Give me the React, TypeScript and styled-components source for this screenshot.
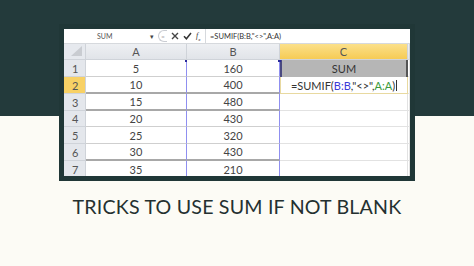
import { FC } from "react";
import styled, { createGlobalStyle } from "styled-components";

const GlobalStyle = createGlobalStyle`
  html, body {
    margin: 0;
    padding: 0;
  }
  body {
    font-family: "Lato", "Open Sans", sans-serif;
  }
`;

const rowsA = ["5", "10", "15", "20", "25", "30", "35"];
const rowsB = ["160", "400", "480", "430", "320", "430", "210"];
// darker separators under some rows, as in the screenshot
const strong = [false, true, true, false, false, true, false];

const App: FC = () => {
  return (
    <Page>
      <GlobalStyle />
      <Frame>
        <FormulaBar>
          <NameBox>
            <span>SUM</span>
            <Caret>▾</Caret>
          </NameBox>
          <Tools>
            <Pill>=</Pill>
            <ToolIcon>
              <svg width="8" height="8" viewBox="0 0 8 8">
                <path d="M1 1 L7 7 M7 1 L1 7" stroke="#444" strokeWidth="1.4" />
              </svg>
            </ToolIcon>
            <ToolIcon>
              <svg width="9" height="8" viewBox="0 0 9 8">
                <path d="M1 4.2 L3.4 6.8 L8 1" stroke="#333" strokeWidth="1.5" fill="none" />
              </svg>
            </ToolIcon>
            <Fx>
              f<sub>x</sub>
            </Fx>
          </Tools>
          <FormulaText>=SUMIF(B:B,"&lt;&gt;",A:A)</FormulaText>
        </FormulaBar>
        <Grid>
          <Corner>
            <svg width="14" height="12" viewBox="0 0 14 12">
              <path d="M13 1 L13 11 L2 11 Z" fill="#c9ccd1" />
            </svg>
          </Corner>
          <ColHead>A</ColHead>
          <ColHead>B</ColHead>
          <ColHead $active>C</ColHead>
          <ColHead />
          {rowsA.map((a, i) => (
            <Row key={i}>
              <RowHead $active={i === 1}>{i + 1}</RowHead>
              <Cell $strong={strong[i]} $marker={i === 0}>
                {a}
              </Cell>
              <Cell $strong={strong[i]} $marker={i === 0}>
                {rowsB[i]}
              </Cell>
              {i === 0 ? (
                <SumCell>SUM</SumCell>
              ) : i === 1 ? (
                <EditCell>
                  =SUMIF(<Ref $c="#3b3bd8">B:B</Ref>,"&lt;&gt;",
                  <Ref $c="#3a9a3a">A:A</Ref>)<Cursor />
                </EditCell>
              ) : (
                <BlankCell />
              )}
              <BlankCell />
            </Row>
          ))}
        </Grid>
      </Frame>
      <Title>TRICKS TO USE SUM IF NOT BLANK</Title>
    </Page>
  );
};

export default App;

const Page = styled.div`
  width: 474px;
  height: 266px;
  overflow: hidden;
  background: linear-gradient(
    to bottom,
    #233a3b 0,
    #233a3b 116px,
    #fcfbf5 116px,
    #fcfbf5 100%
  );
  display: flex;
  flex-direction: column;
  align-items: center;
`;

const Frame = styled.div`
  margin-top: 24px;
  width: 356px;
  height: 157px;
  box-sizing: border-box;
  border: 5px solid #203737;
  background: #ffffff;
  overflow: hidden;
  display: flex;
  flex-direction: column;
`;

const FormulaBar = styled.div`
  height: 14px;
  flex: none;
  display: flex;
  align-items: center;
  background: #ffffff;
  border-bottom: 1px solid #d6d9dd;
  font-family: "Lato", sans-serif;
  font-size: 7px;
  color: #333;
`;

const NameBox = styled.div`
  width: 90px;
  padding-left: 33px;
  box-sizing: border-box;
  display: flex;
  justify-content: space-between;
  align-items: center;
  color: #555;
`;

const Caret = styled.span`
  font-size: 7px;
  color: #444;
`;

const Tools = styled.div`
  width: 52px;
  height: 14px;
  display: flex;
  align-items: center;
  gap: 4px;
  padding-left: 4px;
  box-sizing: border-box;
  border-right: 1px solid #d6d9dd;
`;

const Pill = styled.span`
  width: 8px;
  height: 10px;
  border: 1px solid #c9ccd2;
  border-right: none;
  border-radius: 6px 0 0 6px;
  font-size: 6px;
  color: #aaa;
  display: flex;
  align-items: center;
  justify-content: center;
`;

const ToolIcon = styled.span`
  display: flex;
  align-items: center;
`;

const Fx = styled.span`
  font-family: "Liberation Serif", serif;
  font-style: italic;
  font-size: 8px;
  color: #333;
  sub {
    font-size: 5px;
  }
`;

const FormulaText = styled.span`
  margin-left: 4px;
  font-size: 7.5px;
  color: #333;
`;

const Grid = styled.div`
  display: grid;
  grid-template-columns: 22px 101px 93px 128px 2px;
  grid-template-rows: 16px 17px 17px 17px 16px 17px 17px 17px;
  font-family: "Lato", sans-serif;
  font-size: 11px;
  color: #444;
`;

const Row = styled.div`
  display: contents;
`;

const Corner = styled.div`
  background: #e6e9ee;
  border-right: 1px solid #cfd3d9;
  border-bottom: 1px solid #cfd3d9;
  display: flex;
  align-items: flex-end;
  justify-content: flex-end;
  padding: 0 2px 2px 0;
`;

const ColHead = styled.div<{ $active?: boolean }>`
  background: ${(p) =>
    p.$active
      ? "linear-gradient(#fbe08a, #f6cb55)"
      : "linear-gradient(#eef0f3, #e1e4e9)"};
  border-right: 1px solid #cfd3d9;
  border-bottom: 1px solid #cfd3d9;
  display: flex;
  align-items: center;
  justify-content: center;
  color: #555;
`;

const RowHead = styled.div<{ $active?: boolean }>`
  background: ${(p) => (p.$active ? "#f8d165" : "#e4e7ec")};
  border-bottom: 1px solid #cfd3d9;
  border-right: 1px solid #cfd3d9;
  display: flex;
  align-items: center;
  padding-left: 8px;
  color: #555;
`;

const Cell = styled.div<{ $strong?: boolean; $marker?: boolean }>`
  position: relative;
  display: flex;
  align-items: center;
  justify-content: center;
  background: #ffffff;
  border-bottom: ${(p) => (p.$strong ? "2px solid #a8a8a8" : "1px solid #cfcfcf")};
  border-right: 1px solid #8f8ff0;
  &::after {
    content: "";
    display: ${(p) => (p.$marker ? "block" : "none")};
    position: absolute;
    top: 0;
    right: -2px;
    width: 3px;
    height: 2px;
    background: #2a2a9a;
  }
`;

const SumCell = styled.div`
  display: flex;
  align-items: center;
  justify-content: center;
  background: #b6b6b6;
  border-left: 2px solid #4a4a80;
  border-right: 2px solid #555;
  color: #333;
`;

const EditCell = styled.div`
  display: flex;
  align-items: center;
  justify-content: center;
  background: #ffffff;
  border: 1px solid #e8d9a0;
  border-top: none;
  color: #333;
  white-space: pre;
`;

const Ref = styled.span<{ $c: string }>`
  color: ${(p) => p.$c};
`;

const Cursor = styled.span`
  width: 1px;
  height: 11px;
  margin-left: 1px;
  background: #333;
`;

const BlankCell = styled.div`
  background: #ffffff;
  border-bottom: 1px solid #e2e2e2;
  border-right: 1px solid #e2e2e2;
`;

const Title = styled.h1`
  margin: 14px 0 0;
  font-family: "Lato", sans-serif;
  font-weight: 400;
  font-size: 19.6px;
  letter-spacing: 0.2px;
  color: #243030;
`;
